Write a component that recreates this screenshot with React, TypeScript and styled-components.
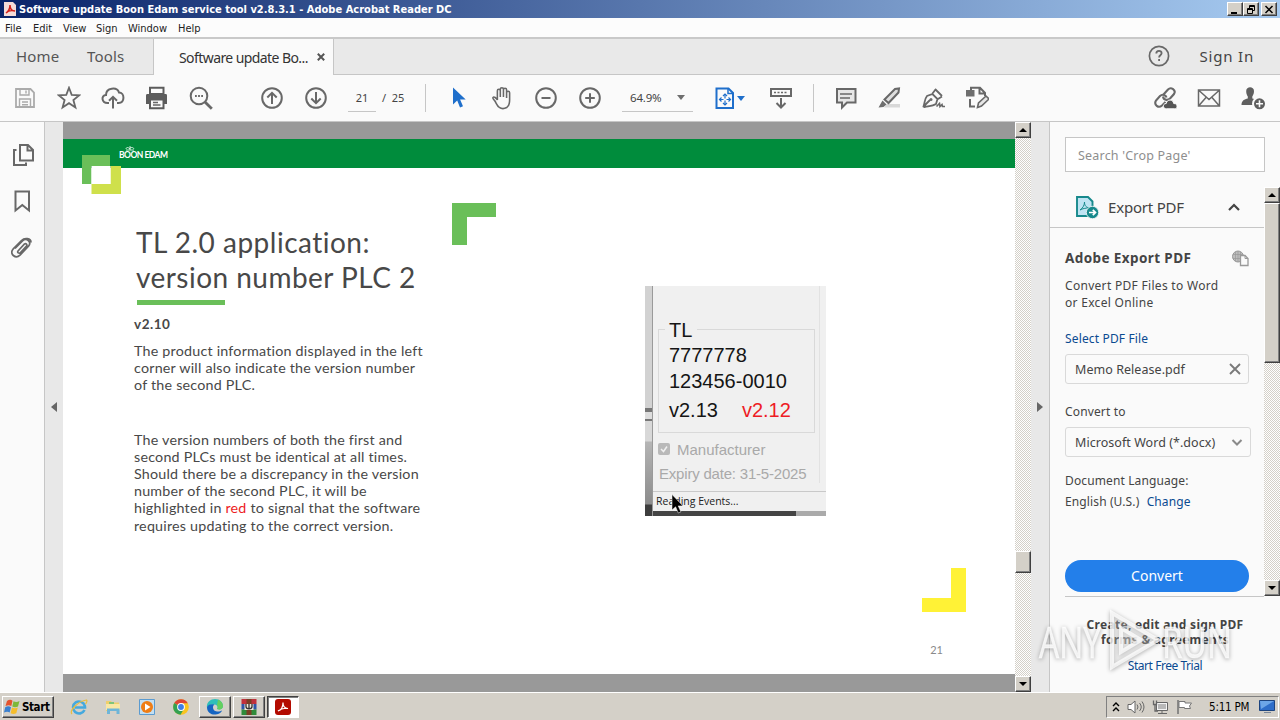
import type { ReactNode } from "react";
import styled, { createGlobalStyle, css } from "styled-components";

const adobe = `"Noto Sans", "Open Sans", sans-serif`;
const tahoma = `"DejaVu Sans Condensed", "DejaVu Sans", sans-serif`;
const calibri = `Lato, "Open Sans", sans-serif`;

const menuItems = [
  { label: "File", width: 28 },
  { label: "Edit", width: 30 },
  { label: "View", width: 33 },
  { label: "Sign", width: 32 },
  { label: "Window", width: 50 },
  { label: "Help", width: 30 },
];

function Icon({ size = 24, children }: { size?: number; children: ReactNode }) {
  return (
    <svg
      width={size}
      height={size}
      viewBox="0 0 24 24"
      fill="none"
      stroke="#686868"
      strokeWidth="2"
    >
      {children}
    </svg>
  );
}

function TitleBar() {
  return (
    <TitleRow>
      <svg width="12" height="14" viewBox="0 0 12 14">
        <path d="M0 0h9l3 3v11H0z" fill="#f6dcd8" />
        <path
          d="M2 11c3-2 4-5 4-8 0 4 2 6 5 6-4-1-7 0-9 2z"
          fill="none"
          stroke="#d3221b"
          strokeWidth="1.5"
        />
      </svg>
      <TitleText>
        Software update Boon Edam service tool v2.8.3.1 - Adobe Acrobat Reader DC
      </TitleText>
      <WindowButton>
        <svg width="10" height="9">
          <path d="M1 7h6v2H1z" />
        </svg>
      </WindowButton>
      <WindowButton>
        <svg width="10" height="9" fill="none" stroke="#000">
          <path d="M3.5 3V.5h5v5H7M3 1.5h6M1.5 3.5h5v5h-5zM1 4.5h6" />
        </svg>
      </WindowButton>
      <WindowButton $gap={2}>
        <svg width="10" height="9" fill="none" stroke="#000" strokeWidth="1.5">
          <path d="M1.5 1l7 7M8.5 1l-7 7" />
        </svg>
      </WindowButton>
    </TitleRow>
  );
}

function Tabs() {
  return (
    <TabRow>
      <NavTab $width={71}>Home</NavTab>
      <NavTab $width={82}>Tools</NavTab>
      <ActiveTab>
        <TabTitle>Software update Bo...</TabTitle>
        <svg width="8" height="8" fill="none" stroke="#555" strokeWidth="2">
          <path d="M.8.8l6.4 6.4M7.2.8L.8 7.2" />
        </svg>
      </ActiveTab>
      <TabFill>
        <Icon>
          <circle cx="12" cy="12" r="9.6" strokeWidth="1.7" />
          <path d="M9.3 9.6c0-3.6 5.5-3.4 5.3-.3-.1 2-2.5 1.9-2.5 4.1M12.1 15v2" strokeWidth="1.8" />
        </Icon>
        <SignIn>Sign In</SignIn>
      </TabFill>
    </TabRow>
  );
}

function Toolbar() {
  return (
    <ToolRow>
      <Tool>
        <Icon>
          <g stroke="#ababab">
            <path d="M3 3h14.5L21 6.5V21H3z" strokeWidth="1.8" />
            <path d="M7 3v6h9V3M13 4.5v3M6.5 21v-8h11v8M9 16h6M9 18.7h6" strokeWidth="1.4" />
          </g>
        </Icon>
      </Tool>
      <Tool>
        <Icon>
          <path d="M12 1.8l2.7 7.1 7.6.4-5.9 4.7 2 7.4L12 17.2l-6.4 4.2 2-7.4L1.7 9.3l7.6-.4z" strokeWidth="1.8" />
        </Icon>
      </Tool>
      <Tool>
        <Icon>
          <path d="M8 17H6.500C.5 17-.2 9.500 5 9c0-7.500 11-8.500 13-2.500 5.800.2 6.200 10-.5 10.500H16" />
          <path d="M12 22.500V11M8 14.800l4-4 4 4" />
        </Icon>
      </Tool>
      <Tool>
        <Icon>
          <path d="M1 9.500C1 8.500 1.500 8 2.500 8h18c1 0 1.500.5 1.500 1.500V18H1z" fill="#5c5c5c" stroke="none" />
          <path d="M5 1.800h13.500V8H5z" fill="#fafafa" stroke="#5c5c5c" />
          <path d="M4 8h15.500v2.500H4z" fill="#5c5c5c" stroke="none" />
          <path d="M5 13.500h13.500v8.700H5z" fill="#fafafa" stroke="#5c5c5c" />
          <path d="M8 16.500h5M8 19h7.500" strokeWidth="1.300" />
        </Icon>
      </Tool>
      <Tool>
        <Icon>
          <circle cx="10" cy="10" r="8.300" />
          <path d="M16 16l6.800 6.800" strokeWidth="2.800" />
          <path d="M6 10h1.800M9.100 10h1.800M12.200 10H14" />
        </Icon>
      </Tool>
      <Tool $gap={27}>
        <Icon>
          <circle cx="12" cy="12" r="9.800" />
          <path d="M12 18V7M7.300 11.500L12 6.800l4.700 4.700" />
        </Icon>
      </Tool>
      <Tool>
        <Icon>
          <circle cx="12" cy="12" r="9.800" />
          <path d="M12 6v11M7.300 12.500l4.700 4.700 4.700-4.700" />
        </Icon>
      </Tool>
      <PageField>21</PageField>
      <PageTotal>/&nbsp; 25</PageTotal>
      <Divider $gap={20} />
      <Tool $gap={11}>
        <Icon>
          <path d="M6 1.500v17l4.200-4 2.800 7 3-1.300-2.900-6.700h5.600z" fill="#1f6fcb" stroke="none" />
        </Icon>
      </Tool>
      <Tool $gap={-1}>
        <Icon>
          <path
            d="M8.500 21.500c-2-1-3-4-4.500-6.500C3 13.500 1.500 12.800 2 11.500c1-1.500 3.500.5 4.500 2.500V4.500c0-2 3-2 3 0V11 3c0-2 3.200-2 3.200 0v8V3.500c0-2 3.200-2 3.200 0V12 6.500c0-2 3.100-2 3.100 0V14c0 3-.3 6-3 7.700-2.500 1.300-5.500 1.300-7.500-.2"
            strokeWidth="1.600"
            transform="translate(1 .3) scale(.98)"
          />
        </Icon>
      </Tool>
      <Tool>
        <Icon>
          <circle cx="12" cy="12" r="9.800" />
          <path d="M7.500 12h9" />
        </Icon>
      </Tool>
      <Tool>
        <Icon>
          <circle cx="12" cy="12" r="9.800" />
          <path d="M7.200 12h9.600M12 7.200v9.600" />
        </Icon>
      </Tool>
      <ZoomField>
        64.9%
        <Caret />
      </ZoomField>
      <Tool $gap={20} $width={24}>
        <Icon>
          <g stroke="#1f6fcb">
            <path d="M3.500 2.500h12L20 7v15H3.500z" />
            <path d="M15 2.500V7.500h5" strokeWidth="1.500" />
            <path d="M12 8v11M6.500 13.500h11" strokeWidth="1.200" />
            <path d="M10 10l2-2 2 2M10 17l2 2 2-2M8.500 11.500l-2 2 2 2M15.500 11.500l2 2-2 2" strokeWidth="1.200" />
            <path d="M10.500 13.500h3" stroke="#fafafa" />
          </g>
        </Icon>
      </Tool>
      <Caret $blue />
      <Tool $gap={14}>
        <Icon>
          <path d="M2 3h20v7H2z" />
          <path d="M5 6.500h14" strokeDasharray="2 1.500" strokeWidth="1.700" />
          <path d="M12 12v9M7.500 17l4.500 4.500 4.500-4.500" />
        </Icon>
      </Tool>
      <Divider $gap={10} />
      <Tool $gap={10}>
        <Icon>
          <path d="M3 3h18.500v13.500H13l-5 5v-5H3z" fill="#e6e6e6" />
          <path d="M6 8h12M6 12h10" strokeWidth="1.400" />
        </Icon>
      </Tool>
      <Tool $gap={-1}>
        <Icon>
          <path d="M10 18h13v3.500H7z" fill="#d8d8d8" stroke="none" />
          <path d="M7.500 13.500L18 3l4-.5-.5 4L11.500 17z" fill="#dedede" />
          <path d="M5.500 14.500l4 4-3 2.500-5 .5z" fill="#6e6e6e" stroke="none" />
        </Icon>
      </Tool>
      <Tool>
        <Icon>
          <path d="M2.500 20.500C4 16 3.500 13 6 10l5.500-2 5 5-1.500 5c-3 2-6 2-11.500 3zM3 20l6-6M11.500 7.500l3-4M17 13l4-2.500M14 3l7 7" strokeWidth="1.800" />
          <circle cx="10" cy="13.500" r="1.500" fill="#6e6e6e" stroke="none" />
          <path d="M15.500 20.500l3-3 .5 3 2-2 .5 2H24" strokeWidth="1.600" />
        </Icon>
      </Tool>
      <Tool>
        <Icon>
          <path d="M6 4V1.800h9L20 7v3M14.500 2v5.500H20M5 13v7.500h5" />
          <path d="M1 4h8.500v6.500H1z" fill="#6e6e6e" stroke="none" />
          <path d="M12.500 21.500l1-4.500 7.500-7 3 3-7.500 7z" fill="#e6e6e6" strokeWidth="1.600" />
        </Icon>
      </Tool>
      <RightTools>
        <Tool>
          <Icon>
            <g strokeWidth="2.100">
              <path d="M10.500 8.500l4.500-5c3-3 8.500.5 6 4.500L17 12.500c-2.500 2.500-6.500 1.500-7-2" />
              <path d="M12.500 16l-3.500 3.500c-3.500 3-8.500-.5-6-5L7 10c2.500-2.300 6-1 6.500 1.500" />
            </g>
            <path d="M13.500 22.800c-4.300 0-3.800-5.600-.3-5.300.8-4.700 7-4.500 7.500 0 4.400-.2 4.500 5.300.8 5.300z" fill="#555" stroke="#fafafa" strokeWidth="1" />
          </Icon>
        </Tool>
        <Tool>
          <Icon>
            <path d="M1.500 4h21v16h-21zM2 4.500l10 9 10-9M2 19.500l7-8M22 19.500l-7-8" strokeWidth="1.500" />
          </Icon>
        </Tool>
        <Tool>
          <Icon>
            <g fill="#5f5f5f" stroke="none">
              <path d="M5.200 5c0-5 7.800-5 7.800 0 0 3-1 4-1.700 5.500v2c3 .8 6.200 2 6.200 6.500H.5c0-4.500 3-5.700 6.300-6.500v-2C6 9 5.200 8 5.200 5z" />
              <circle cx="18.500" cy="17.800" r="6.500" stroke="#fafafa" />
            </g>
            <path d="M18.500 14.300v7M15 17.800h7" stroke="#fafafa" strokeWidth="1.600" />
          </Icon>
        </Tool>
      </RightTools>
    </ToolRow>
  );
}

function Screenshot() {
  return (
    <Shot>
      <ShotEdge />
      <ShotPanel>
        <GroupBox>
          <GroupTitle>TL</GroupTitle>
          <GroupLine $height={25}>7777778</GroupLine>
          <GroupLine $height={27}>123456-0010</GroupLine>
          <GroupLine $height={31}>
            v2.13<Warn>v2.12</Warn>
          </GroupLine>
        </GroupBox>
        <ShotCheck>
          <svg width="12" height="12">
            <rect width="12" height="12" rx="2" fill="#b9b9b9" />
            <path d="M3 6l2.500 2.500L9 3.500" fill="none" stroke="#f0f0f0" strokeWidth="1.500" />
          </svg>
          Manufacturer
        </ShotCheck>
        <ShotExpiry>Expiry date: 31-5-2025</ShotExpiry>
        <ShotStatus>Reading Events...</ShotStatus>
      </ShotPanel>
      <Pointer width="14" height="20" viewBox="0 0 14 20">
        <path d="M1 .5v15.500l3.600-3.200 2.700 6.200 2.600-1.100-2.700-6h4.800z" fill="#000" stroke="#fff" strokeWidth=".5" />
      </Pointer>
    </Shot>
  );
}

function Slide() {
  return (
    <Page>
      <Banner>
        <Brand>
          <svg width="10" height="5" fill="none" stroke="#fff" strokeWidth=".8">
            <path d="M1 4h8M1 3c0-2 3-2 3.500 0C5 1 8.500 1 9 3M5 0v4" />
          </svg>
          BOON EDAM
        </Brand>
      </Banner>
      <LogoMark width="40" height="40">
        <path d="M0 0h28v11H9.500v18H0z" fill="#6abf59" />
        <path d="M28.500 11H39v28H9.500V29h19z" fill="#cfe04b" />
        <path d="M9.500 11h19v18h-19z" fill="#fff" />
      </LogoMark>
      <GreenCorner />
      <YellowCorner />
      <SlideBody>
        <SlideText>
          <Heading>
            <HeadLine $spacing={0.5}>TL 2.0 application:</HeadLine>
            <HeadLine $spacing={0.47}>version number PLC 2</HeadLine>
          </Heading>
          <Rule />
          <Version>v2.10</Version>
          <Paragraph>
            The product information displayed in the left
            <br />
            corner will also indicate the version number
            <br />
            of the second PLC.
          </Paragraph>
          <Paragraph>
            The version numbers of both the first and
            <br />
            second PLCs must be identical at all times.
            <br />
            Should there be a discrepancy in the version
            <br />
            number of the second PLC, it will be
            <br />
            highlighted in <em>red</em> to signal that the software
            <br />
            requires updating to the correct version.
          </Paragraph>
        </SlideText>
        <Screenshot />
      </SlideBody>
      <PageNumber>21</PageNumber>
    </Page>
  );
}

function ToolsPanel() {
  return (
    <Panel>
      <Search>Search 'Crop Page'</Search>
      <PanelBody>
        <PanelContent>
          <PanelHeader>
            <svg width="24" height="24" viewBox="0 0 24 24" fill="none" stroke="#17898c" strokeWidth="1.900">
              <path d="M2 2h11l4.500 4.500V21H2z" fill="#bfe4f3" />
              <path d="M5 15c3-2 4.500-5 4.500-8 0 4 2 5.500 5 6-4 0-7 .5-9.500 2z" strokeWidth="1" />
              <circle cx="17.500" cy="17.500" r="6.200" fill="#17898c" stroke="#fafafa" strokeWidth=".8" />
              <path d="M14 17.500h6M17.800 14.800l2.700 2.700-2.700 2.700" stroke="#fff" strokeWidth="1.700" />
            </svg>
            <HeaderText>Export PDF</HeaderText>
            <svg width="12" height="8" fill="none" stroke="#444" strokeWidth="2.200">
              <path d="M1 7l5-5 5 5" />
            </svg>
          </PanelHeader>
          <PanelForm>
            <FormTitle>
              <span>Adobe Export PDF</span>
              <svg width="17" height="17" fill="#bdbdbd" stroke="#999">
                <circle cx="6" cy="6.500" r="5.500" />
                <path d="M1 4.500h10M1 8.500h10M6 1v11M3.500 2v9M8.500 2v9" strokeWidth=".7" />
                <path d="M8.500 5.500h4.500l3 3v7H8.500z" fill="#fafafa" strokeWidth="1.300" />
                <path d="M13 5.500v3h3" fill="none" />
              </svg>
            </FormTitle>
            <Blurb>
              Convert PDF Files to Word
              <br />
              or Excel Online
            </Blurb>
            <LinkText $top={19}>Select PDF File</LinkText>
            <Field $width={184}>
              Memo Release.pdf
              <svg width="12" height="12" fill="none" stroke="#7a7a7a" strokeWidth="1.900">
                <path d="M1 1l10 10M11 1L1 11" />
              </svg>
            </Field>
            <FormLabel>Convert to</FormLabel>
            <Field $width={186}>
              Microsoft Word (*.docx)
              <svg width="12" height="7" fill="none" stroke="#8a8a8a" strokeWidth="2">
                <path d="M1.500 1L6 5.500 10.500 1" />
              </svg>
            </Field>
            <Language>
              Document Language:
              <br />
              English (U.S.) <LinkInline>Change</LinkInline>
            </Language>
            <ConvertButton>Convert</ConvertButton>
          </PanelForm>
        </PanelContent>
        <Scrollbar>
          <ScrollButton />
          <ScrollThumb $height={160} />
          <ScrollSpace />
          <ScrollButton $down />
        </Scrollbar>
      </PanelBody>
      <Promo>
        <strong>
          Create, edit and sign PDF
          <br />
          forms &amp; agreements
        </strong>
        <LinkText $top={10} $spacing={-0.45}>
          Start Free Trial
        </LinkText>
      </Promo>
    </Panel>
  );
}

function Taskbar() {
  return (
    <TaskRow>
      <StartButton>
        <svg width="17" height="16" viewBox="0 0 17 16">
          <path d="M3 2c2-1.500 4-1.500 5.500-.3L7.300 7C5.500 6 4 6 1.500 7z" fill="#e5532d" />
          <path d="M9.500 2.300c2 1.200 4 1 6-.2L14 7.500c-2 1-4 1-5.700 0z" fill="#7db83a" />
          <path d="M1.200 8.200c2.500-1.200 4-1 5.800 0L5.700 13.500C4 12.300 2 12.500 0 13.600z" fill="#3b80cf" />
          <path d="M8 8.600c2 1 4 1 5.800 0l-1.500 5.600c-2 1-3.800 1-5.700 0z" fill="#f5bd2c" />
        </svg>
        Start
      </StartButton>
      <QuickLaunch>
        <svg width="18" height="18" viewBox="0 0 18 18" fill="none">
          <path d="M14.500 12a6 6 0 1 1 .3-4.200c.2.800.2 1.200.2 1.700H5" stroke="#45a9de" strokeWidth="2.600" />
          <path d="M2 16C-1 13 8 3 16.500 2c1 .8 0 3-1 4" stroke="#e9bd3e" strokeWidth="1.200" />
        </svg>
      </QuickLaunch>
      <QuickLaunch>
        <svg width="18" height="18" viewBox="0 0 18 18">
          <path d="M2 3h5l1 1.500h7V13H2z" fill="#f0cf6b" />
          <path d="M2 6h14v6H2z" fill="#f9e7a4" />
          <path d="M3 10.500h12.500V16h-3v-3H6v3H3z" fill="#6eb5d8" />
          <path d="M5 4h5v2H5z" fill="#7fc47a" />
        </svg>
      </QuickLaunch>
      <QuickLaunch>
        <svg width="18" height="18" viewBox="0 0 18 18">
          <path d="M1.500 1.500h15v15h-15z" fill="#c3dff2" stroke="#5b9bd0" />
          <circle cx="9" cy="9" r="6" fill="#ef7d15" />
          <path d="M7 5.500l5.500 3.500L7 12.500z" fill="#fff" />
        </svg>
      </QuickLaunch>
      <QuickLaunch>
        <svg width="18" height="18" viewBox="0 0 18 18">
          <circle cx="9" cy="9" r="7.800" fill="#f9c41f" />
          <path d="M9 9L2.200 5.100A7.800 7.800 0 0 1 15.800 5.200H9z" fill="#dd4535" />
          <path d="M2.200 5.100A7.800 7.800 0 0 0 8.500 16.800L12 10.800 9 9z" fill="#34a152" />
          <circle cx="9" cy="9" r="3.900" fill="#fff" />
          <circle cx="9" cy="9" r="2.900" fill="#3d7ee6" />
        </svg>
      </QuickLaunch>
      <TaskButton $gap={1}>
        <svg width="18" height="18" viewBox="0 0 18 18">
          <path d="M1 10C0 4 5 1 9 1c5 0 8 3.500 8 7 0 3-3 4-6 3 1-1 1-4-2.500-4.500C5 6 2 7.500 1 10z" fill="#2fbfb9" />
          <path d="M12 1.800c3 1.200 5 3.400 5 6.200 0 3-3 4-6 3 1-1 1-3 0-4z" fill="#65cf5e" />
          <path d="M1 9c1.500-3 5-3 7.500-2.500C6 8 6.500 13 11 13.500c2 .3 4-.5 5-1C14 18 1 19 1 9z" fill="#1565c2" />
        </svg>
      </TaskButton>
      <TaskButton>
        <svg width="18" height="18" viewBox="0 0 18 18">
          <path d="M1.500 1h15v5h-15z" fill="#c0313c" />
          <path d="M1.500 6h15v5.500h-15z" fill="#2f55a8" />
          <path d="M1.500 11.500h15V17h-15z" fill="#2f8b3a" />
          <path d="M6.500 1h5v5h-5zM6.500 12h5v5h-5z" fill="#7a3f25" />
          <path d="M4.500 6h9v6h-9z" fill="#efe8d8" />
          <path d="M6 6v2.500c0 3 6 3 6 0V6M9 6v4.500" fill="none" stroke="#333" strokeWidth="1.300" />
        </svg>
      </TaskButton>
      <TaskButton $active>
        <svg width="18" height="18" viewBox="0 0 18 18">
          <rect x="1" y="1" width="16" height="16" rx="3" fill="#b30b00" />
          <path d="M4 13c3.500-1 5-4 5-8.500 0 4.500 2 6 5 6-4-.8-7 .2-10 2.500z" fill="none" stroke="#fff" strokeWidth="1.200" />
        </svg>
      </TaskButton>
      <Tray>
        <svg width="8" height="12" fill="none" stroke="#000" strokeWidth="1.400">
          <path d="M1 5l3-3 3 3M1 10l3-3 3 3" />
        </svg>
        <svg width="18" height="16" fill="#fff" stroke="#666">
          <path d="M1 5.500h3L8 2v12l-4-3.500H1z" />
          <path d="M10 5.500q2 2.500 0 5M12.500 4q3.500 4 0 8M15 2.500q4 5.500 0 11" fill="none" />
        </svg>
        <svg width="17" height="16" fill="#f4f4f4" stroke="#666">
          <path d="M4.500 3.500h11v8h-11zM6 14.500h9M10 12v2" />
          <path d="M6 5h8v5H6z" fill="#b8b8b8" stroke="none" />
          <path d="M1.500 1.500v4h3v-4M3 5.500V12h3" fill="none" strokeWidth="1.300" />
        </svg>
        <svg width="17" height="16" fill="#fff" stroke="#777">
          <path d="M2 1v14" strokeWidth="1.600" />
          <path d="M3 2.500h6v1.500h6.500l-2 3 1 2.500H8.500V8.500H3z" />
        </svg>
        <Clock>5:11 PM</Clock>
        <svg width="16" height="15">
          <path d="M.5 1.500h15v10H.5z" fill="#2e6ec9" stroke="#1d447f" />
          <path d="M1 2h14L2 10z" fill="#6ca6e8" />
          <path d="M5 13.500h7" stroke="#7a8799" />
        </svg>
      </Tray>
    </TaskRow>
  );
}

export default function App() {
  return (
    <Desktop>
      <GlobalStyle />
      <TitleBar />
      <MenuRow>
        {menuItems.map((item) => (
          <MenuItem key={item.label} $width={item.width}>
            {item.label}
          </MenuItem>
        ))}
      </MenuRow>
      <Tabs />
      <Toolbar />
      <Workspace>
        <SideNav>
          <Icon>
            <path d="M9 2h8l5 5v10.500H9zM16.500 2v5.500H22M5.500 7H3v15h12v-2.500" />
          </Icon>
          <Icon>
            <path d="M4.500 2.500H18v19l-6.700-5.500-6.800 5.500z" />
          </Icon>
          <Icon>
            <path d="M5.500 12.500l7.500-7.700c4-3.500 9.500 1 6 5.400l-8.500 9c-4.500 4.300-11-1.500-7-6L12 4.500c3-3 9.500-2.500 9.500 2M8.500 15l6.500-7c1.500-1 3 .5 2 2l-6 6.500c-1.500 1.500-3.700 0-2.500-1.500" strokeWidth="1.700" transform="translate(-1.500 1)" />
          </Icon>
        </SideNav>
        <Splitter>
          <SplitArrow />
        </Splitter>
        <Viewer>
          <Slide />
        </Viewer>
        <Scrollbar>
          <ScrollButton />
          <ScrollSpace />
          <ScrollThumb $height={22} />
          <ScrollSpace $height={103} />
          <ScrollButton $down />
        </Scrollbar>
        <Splitter $right>
          <SplitArrow $right />
        </Splitter>
        <ToolsPanel />
      </Workspace>
      <Taskbar />
      <Watermark width="204" height="70" viewBox="0 0 204 70">
        <text x="3" y="52" textLength="62" lengthAdjust="spacingAndGlyphs">
          ANY
        </text>
        <path d="M76 7v54l46-27z" />
        <path d="M85 22v24l20-12z" />
        <text x="126" y="52" textLength="70" lengthAdjust="spacingAndGlyphs">
          RUN
        </text>
      </Watermark>
    </Desktop>
  );
}

const GlobalStyle = createGlobalStyle`
  * {
    box-sizing: border-box;
  }

  body {
    margin: 0;
    overflow: hidden;
  }

  svg {
    display: block;
    flex: none;
  }
`;

const raised = css`
  background: #d4d0c8;
  border: 1px solid;
  border-color: #fff #404040 #404040 #fff;
  box-shadow: inset -1px -1px #808080;
`;

const Desktop = styled.div`
  position: relative;
  width: 1280px;
  height: 720px;
  display: flex;
  flex-direction: column;
  background: #fafafa;
  color: #444;
  font-family: ${adobe};
  white-space: nowrap;
  overflow: hidden;
`;

const TitleRow = styled.header`
  height: 18px;
  flex: none;
  display: flex;
  align-items: center;
  padding: 0 3px 0 4px;
  background: linear-gradient(90deg, #0a246a, #a6caf0);
`;

const TitleText = styled.h1`
  flex: 1;
  margin: 0 0 0 3px;
  color: #fff;
  font: bold 11px ${tahoma};
  letter-spacing: 0.01px;
`;

const WindowButton = styled.span<{ $gap?: number }>`
  ${raised}
  width: 16px;
  height: 14px;
  margin-left: ${({ $gap }) => $gap ?? 0}px;
  display: grid;
  place-items: center;
`;

const MenuRow = styled.nav`
  height: 19px;
  flex: none;
  display: flex;
  align-items: center;
  padding: 1px 0 0 5px;
  background: #fcfcfc;
  color: #222;
  font: 11px ${tahoma};
`;

const MenuItem = styled.span<{ $width: number }>`
  width: ${({ $width }) => $width}px;
`;

const TabRow = styled.div`
  height: 38px;
  flex: none;
  display: flex;
  border-top: 2px solid #c9c9c9;
  background: #e9e9e9;
  font-size: 15px;
`;

const NavTab = styled.div<{ $width: number }>`
  width: ${({ $width }) => $width}px;
  padding-left: 16px;
  line-height: 35px;
  border-bottom: 1px solid #c6c6c6;
  letter-spacing: 0.2px;
  color: #555;
`;

const ActiveTab = styled.div`
  width: 181px;
  display: flex;
  align-items: center;
  padding-right: 8px;
  background: #fafafa;
  border: solid #c6c6c6;
  border-width: 0 1px;
  color: #333;
`;

const TabTitle = styled.span`
  flex: 1;
  padding-left: 25px;
  font-size: 14px;
  letter-spacing: -0.58px;
`;

const TabFill = styled.div`
  flex: 1;
  display: flex;
  align-items: center;
  justify-content: flex-end;
  padding: 0 26px 2px 0;
  border-bottom: 1px solid #c6c6c6;
`;

const SignIn = styled.span`
  margin-left: 29px;
  letter-spacing: 0.8px;
  color: #444;
`;

const ToolRow = styled.div`
  height: 47px;
  flex: none;
  display: flex;
  align-items: center;
  padding-left: 3px;
  border-bottom: 1px solid #c6c6c6;
  font-size: 12px;
`;

const Tool = styled.span<{ $gap?: number; $width?: number }>`
  width: ${({ $width }) => $width ?? 44}px;
  flex: none;
  margin-left: ${({ $gap }) => $gap ?? 0}px;
  display: flex;
  justify-content: center;
`;

const PageField = styled.span`
  width: 28px;
  height: 27px;
  margin-left: 10px;
  line-height: 26px;
  text-align: center;
  border-bottom: 1px solid #c6c6c6;
  font-size: 11px;
`;

const PageTotal = styled.span`
  width: 29px;
  padding-left: 6px;
  line-height: 26px;
  font-size: 11px;
`;

const Divider = styled.i<{ $gap: number }>`
  width: 1px;
  height: 28px;
  margin-left: ${({ $gap }) => $gap}px;
  background: #c6c6c6;
`;

const ZoomField = styled.span`
  width: 71px;
  height: 27px;
  margin-left: 10px;
  padding: 0 8px;
  display: flex;
  align-items: center;
  justify-content: space-between;
  border-bottom: 1px solid #c6c6c6;
  font-size: 11.5px;
  letter-spacing: -0.2px;
`;

const Caret = styled.i<{ $blue?: boolean }>`
  border: 4px solid transparent;
  border-top: 5px solid ${({ $blue }) => ($blue ? "#1f6fcb" : "#6e6e6e")};
  border-bottom: 0;
`;

const RightTools = styled.div`
  display: flex;
  margin: 0 5px 0 auto;
`;

const Workspace = styled.main`
  height: 570px;
  flex: none;
  display: flex;
`;

const SideNav = styled.aside`
  width: 45px;
  flex: none;
  display: flex;
  flex-direction: column;
  gap: 22px;
  padding: 21px 0 0 11px;
  border-right: 1px solid #c6c6c6;
`;

const Splitter = styled.div<{ $right?: boolean }>`
  width: ${({ $right }) => ($right ? 19 : 18)}px;
  flex: none;
  display: grid;
  place-items: center;
  background: #e8e8e8;
  border-right: ${({ $right }) => ($right ? "1px solid #c6c6c6" : "0")};
`;

const SplitArrow = styled.i<{ $right?: boolean }>`
  border: 5px solid transparent;
  ${({ $right }) =>
    $right
      ? "border-left: 6px solid #666; border-right: 0;"
      : "border-right: 6px solid #666; border-left: 0;"}
`;

const Viewer = styled.section`
  width: 952px;
  flex: none;
  padding: 17px 0 18px;
  background: #999;
`;

const Page = styled.article`
  position: relative;
  height: 535px;
  display: flex;
  flex-direction: column;
  background: #fff;
  color: #484848;
  font-family: ${calibri};
`;

const Banner = styled.div`
  height: 29px;
  flex: none;
  padding: 8px 0 0 56px;
  background: #008c3c;
`;

const Brand = styled.div`
  color: #fff;
  font-size: 8.5px;
  font-weight: 700;
  line-height: 9px;
  letter-spacing: -0.5px;

  svg {
    margin: -1px 0 0 6px;
  }
`;

const LogoMark = styled.svg`
  position: absolute;
  left: 19px;
  top: 16px;
`;

const GreenCorner = styled.i`
  position: absolute;
  left: 389px;
  top: 64px;
  width: 44px;
  height: 42px;
  background: linear-gradient(#6abf59, #6abf59) 0 0 / 100% 14px no-repeat,
    linear-gradient(#6abf59, #6abf59) 0 0 / 15px 100% no-repeat;
`;

const YellowCorner = styled.i`
  position: absolute;
  left: 859px;
  top: 429px;
  width: 44px;
  height: 44px;
  background: linear-gradient(#fff236, #fff236) 0 100% / 100% 14px no-repeat,
    linear-gradient(#fff236, #fff236) 100% 0 / 15px 100% no-repeat;
`;

const SlideBody = styled.div`
  display: flex;
  padding: 57px 0 0 71px;
`;

const SlideText = styled.div`
  width: 511px;
`;

const Heading = styled.h2`
  margin: 0 0 0 2px;
  font-size: 28px;
  font-weight: 400;
  line-height: 35px;
`;

const HeadLine = styled.span<{ $spacing: number }>`
  display: block;
  letter-spacing: ${({ $spacing }) => $spacing}px;
`;

const Rule = styled.i`
  display: block;
  width: 88px;
  height: 5px;
  margin: 5px 0 0 3px;
  background: #6abf59;
`;

const Version = styled.p`
  margin: 11px 0 9px;
  font-size: 13.5px;
  font-weight: 700;
  line-height: 17px;
  letter-spacing: 0.5px;
`;

const Paragraph = styled.p`
  margin: 0 0 37px;
  font-size: 14.3px;
  line-height: 17.2px;
  letter-spacing: 0.21px;

  em {
    color: #ed1c24;
    font-style: normal;
  }
`;

const PageNumber = styled.span`
  margin: auto 72px 17px auto;
  color: #8a8a8a;
  font-size: 11px;
  line-height: 14px;
`;

const Shot = styled.figure`
  position: relative;
  width: 181px;
  height: 230px;
  margin: 61px 0 0;
  display: flex;
  background: #f0f0f0;
  font-family: "Liberation Sans", Arial, sans-serif;
`;

const ShotEdge = styled.i`
  width: 8px;
  flex: none;
  border-right: 1px solid #9a9a9a;
  background: linear-gradient(
    #d2d2d2 0 122px,
    #777 122px 126px,
    #ddd 126px 133px,
    #777 133px 135px,
    #d8d8d8 135px 155px,
    #b5b5b5 156px,
    #8c8c8c 218px,
    #3d3d3d 219px
  );
`;

const ShotPanel = styled.div`
  flex: 1;
  display: flex;
  flex-direction: column;
  padding: 43px 0 0 5px;
  background: linear-gradient(90deg, #444 143px, #aaa 143px) 0 100% / 100% 5px no-repeat,
    linear-gradient(#e2e2e2, #e2e2e2) 166px 0 / 1px 197px no-repeat;
`;

const GroupBox = styled.div`
  width: 157px;
  height: 104px;
  padding-left: 10px;
  border: 1px solid #d9d9d9;
  color: #151515;
  font-size: 20px;
`;

const GroupTitle = styled.div`
  width: 32px;
  margin: -13px 0 0 -4px;
  padding-left: 4px;
  line-height: 26px;
  background: #f0f0f0;
`;

const GroupLine = styled.div<{ $height: number }>`
  height: ${({ $height }) => $height}px;
  line-height: ${({ $height }) => $height}px;
`;

const Warn = styled.span`
  margin-left: 24px;
  color: #ee1c25;
`;

const ShotCheck = styled.div`
  display: flex;
  align-items: center;
  gap: 7px;
  height: 24px;
  margin-top: 4px;
  color: #a9a9a9;
  font-size: 15px;
`;

const ShotExpiry = styled.div`
  height: 31px;
  padding-left: 1px;
  line-height: 25px;
  color: #a9a9a9;
  font-size: 15px;
  letter-spacing: -0.2px;
`;

const ShotStatus = styled.div`
  height: 20px;
  margin: -1px 0 0 -5px;
  padding-left: 3px;
  line-height: 19px;
  border-top: 1px solid #c9c9c9;
  border-bottom-left-radius: 5px;
  background: #f0f0f0;
  color: #222;
  font-family: "Open Sans", sans-serif;
  font-size: 10.5px;
`;

const Pointer = styled.svg`
  position: absolute;
  left: 26px;
  top: 208px;
`;

const Scrollbar = styled.div`
  width: 16px;
  flex: none;
  display: flex;
  flex-direction: column;
  background: repeating-conic-gradient(#d4d0c8 0 25%, #fff 0 50%) 0 0 / 2px 2px;
`;

const ScrollButton = styled.span<{ $down?: boolean }>`
  ${raised}
  height: 16px;
  flex: none;
  display: grid;
  place-items: center;

  &::after {
    content: "";
    border: 4px solid transparent;
    ${({ $down }) =>
      $down
        ? "border-top-color: #000; border-bottom: 0;"
        : "border-bottom-color: #000; border-top: 0;"}
  }
`;

const ScrollThumb = styled.span<{ $height: number }>`
  ${raised}
  height: ${({ $height }) => $height}px;
  flex: none;
`;

const ScrollSpace = styled.span<{ $height?: number }>`
  flex: ${({ $height }) => ($height ? `0 0 ${$height}px` : "1")};
`;

const Panel = styled.aside`
  flex: 1;
  display: flex;
  flex-direction: column;
`;

const Search = styled.div`
  width: 200px;
  height: 35px;
  margin: 15px 0 15px 15px;
  padding-left: 12px;
  line-height: 35px;
  border: 1px solid #c6c6c6;
  background: #fff;
  color: #8e8e8e;
  font-size: 12.5px;
  letter-spacing: 0.2px;
`;

const PanelBody = styled.div`
  height: 409px;
  display: flex;
`;

const PanelContent = styled.div`
  width: 214px;
`;

const PanelHeader = styled.div`
  height: 41px;
  display: flex;
  align-items: center;
  padding: 0 24px 0 25px;
  border-bottom: 1px solid #c6c6c6;
`;

const HeaderText = styled.span`
  flex: 1;
  padding-left: 9px;
  font-size: 15px;
  letter-spacing: -0.2px;
`;

const PanelForm = styled.div`
  height: 369px;
  padding: 20px 0 0 15px;
  font-size: 12px;
  background: linear-gradient(#c6c6c6, #c6c6c6) 15px 100% / 100% 1px no-repeat;
`;

const FormTitle = styled.div`
  display: flex;
  justify-content: space-between;
  align-items: center;
  height: 20px;
  padding-right: 15px;
  font-size: 13.5px;
  font-weight: 700;
  letter-spacing: 0.4px;
`;

const Blurb = styled.p`
  margin: 9px 0 0;
  line-height: 17px;
  letter-spacing: 0.3px;
`;

const LinkText = styled.a<{ $top: number; $spacing?: number }>`
  display: block;
  margin-top: ${({ $top }) => $top}px;
  color: #0a4a91;
  line-height: 17px;
  letter-spacing: ${({ $spacing }) => $spacing ?? 0.15}px;
`;

const Field = styled.div<{ $width: number }>`
  width: ${({ $width }) => $width}px;
  height: 30px;
  margin-top: 7px;
  padding: 0 7px 0 9px;
  display: flex;
  align-items: center;
  justify-content: space-between;
  border: 1px solid #d9d9d9;
  border-radius: 3px;
  font-size: 12.5px;
  letter-spacing: 0.05px;
`;

const FormLabel = styled.div`
  margin-top: 19px;
  line-height: 17px;
  letter-spacing: 0.15px;
`;

const Language = styled.p`
  margin: 13px 0 0;
  line-height: 21px;
  letter-spacing: 0.12px;
`;

const LinkInline = styled.a`
  margin-left: 4px;
  color: #0a4a91;
`;

const ConvertButton = styled.div`
  width: 184px;
  height: 32px;
  margin-top: 48px;
  border-radius: 16px;
  background: #237fea;
  color: #fff;
  font-size: 14px;
  line-height: 31px;
  text-align: center;
`;

const Promo = styled.footer`
  padding-top: 21px;
  text-align: center;
  font-size: 12px;

  strong {
    display: block;
    line-height: 15px;
    letter-spacing: 0.3px;
  }
`;

const TaskRow = styled.footer`
  height: 28px;
  flex: none;
  display: flex;
  align-items: center;
  padding: 0 1px 0 2px;
  border-top: 1px solid #fff;
  background: #d4d0c8;
`;

const StartButton = styled.div`
  ${raised}
  width: 52px;
  height: 22px;
  margin-right: 8px;
  display: flex;
  align-items: center;
  gap: 1px;
  padding-left: 1px;
  color: #000;
  font: bold 11.5px ${tahoma};
  letter-spacing: -0.4px;
`;

const QuickLaunch = styled.span`
  width: 34px;
  display: flex;
  justify-content: center;
`;

const TaskButton = styled.span<{ $active?: boolean; $gap?: number }>`
  ${raised}
  width: 32px;
  height: 22px;
  margin-left: ${({ $gap }) => $gap ?? 2}px;
  display: grid;
  place-items: center;
  ${({ $active }) =>
    $active &&
    "background: #fff; border-color: #404040 #fff #fff #404040; box-shadow: inset 1px 1px #808080;"}
`;

const Tray = styled.div`
  width: 173px;
  height: 22px;
  margin-left: auto;
  padding: 0 3px 0 5px;
  display: flex;
  align-items: center;
  gap: 7px;
  border: 1px solid;
  border-color: #808080 #fff #fff #808080;
`;

const Clock = styled.span`
  flex: 1;
  padding-left: 9px;
  color: #000;
  font: 11.5px ${tahoma};
  letter-spacing: -0.2px;
`;

const Watermark = styled.svg`
  position: absolute;
  left: 1036px;
  top: 606px;
  fill: #fff;
  font: 43px "Open Sans", sans-serif;
  filter: drop-shadow(0 1px 2px rgba(0, 0, 0, 0.4));

  text {
    fill-opacity: 0.8;
    stroke: #fff;
    stroke-opacity: 0.5;
  }

  path {
    fill-opacity: 0.25;
    stroke: #fff;
    stroke-opacity: 0.75;
    stroke-width: 4px;
  }
`;
